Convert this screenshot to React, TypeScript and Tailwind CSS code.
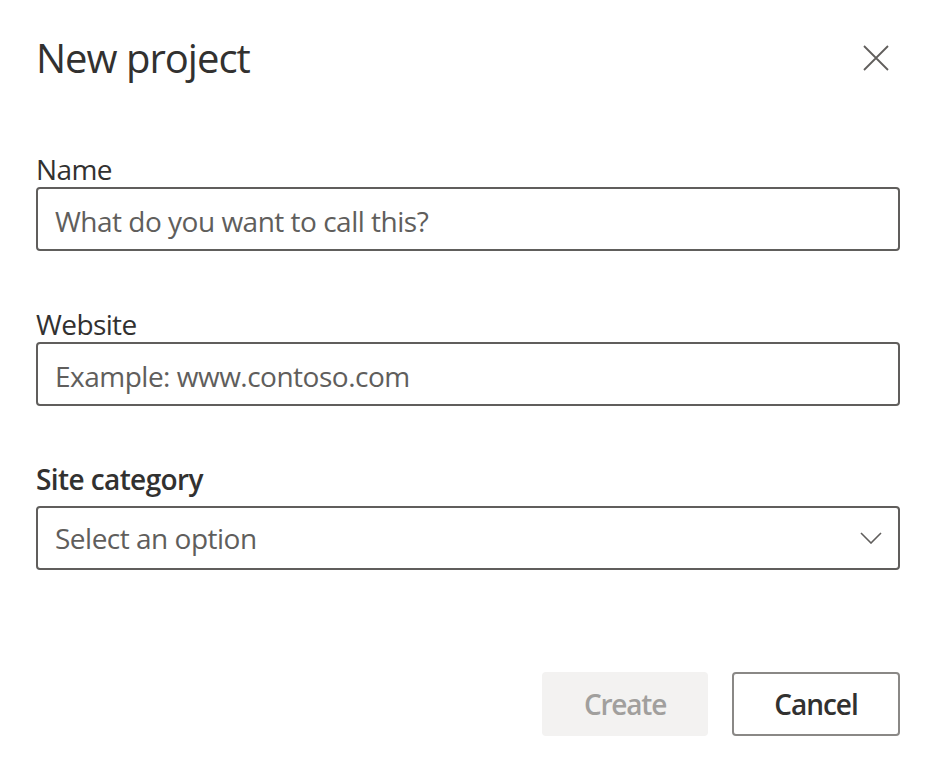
import { useState } from 'react';

const font = { fontFamily: '"Open Sans", "Noto Sans", Arial, sans-serif' };

export default function App() {
  const [name, setName] = useState('');
  const [site, setSite] = useState('');

  return (
    <div className="w-[942px] h-[764px] bg-white px-[36px] text-[#323130]" style={font}>
      <div className="w-[864px]">
        <div className="flex items-center justify-between pt-[32px] h-[84px]">
          <h1 className="text-[40px] leading-[52px] font-normal tracking-[-1px]">New project</h1>
          <button className="w-12 h-12 flex items-center justify-center text-[#605e5c]">
            <svg width="26" height="26" viewBox="0 0 26 26" fill="none" stroke="currentColor" strokeWidth="1.8">
              <path d="M1 1L25 25M25 1L1 25" />
            </svg>
          </button>
        </div>

        <label className="block mt-[67px] text-[28px] leading-[36px] tracking-[-0.6px]">Name</label>
        <input
          value={name}
          onChange={(e) => setName(e.target.value)}
          placeholder="What do you want to call this?"
          className="block w-full h-[64px] border-2 border-[#605e5c] rounded-[4px] px-[17px] pt-[3px] text-[28px] tracking-[-0.5px] outline-none placeholder:text-[#605e5c]"
        />

        <label className="block mt-[55px] text-[28px] leading-[36px] tracking-[-0.6px]">Website</label>
        <input
          value={site}
          onChange={(e) => setSite(e.target.value)}
          placeholder="Example: www.contoso.com"
          className="block w-full h-[64px] border-2 border-[#605e5c] rounded-[4px] px-[17px] pt-[3px] text-[28px] tracking-[-0.5px] outline-none placeholder:text-[#605e5c]"
        />

        <div className="mt-[55px] text-[28px] leading-[36px] font-semibold tracking-[-0.6px]">Site category</div>
        <div className="mt-[9px] flex items-center justify-between h-[64px] border-2 border-[#605e5c] rounded-[4px] pl-[17px] pr-[16px] text-[28px] tracking-[-0.5px] text-[#605e5c]">
          <span>Select an option</span>
          <svg width="22" height="12" viewBox="0 0 22 12" fill="none" stroke="currentColor" strokeWidth="1.6">
            <path d="M1 1L11 11L21 1" />
          </svg>
        </div>

        <div className="mt-[102px] flex justify-end gap-[24px]">
          <button disabled className="w-[166px] h-[64px] rounded-[4px] bg-[#f3f2f1] text-[#a19f9d] text-[28px] font-semibold tracking-[-1.2px]">
            Create
          </button>
          <button className="w-[168px] h-[64px] rounded-[4px] border-2 border-[#8a8886] bg-white text-[#323130] text-[28px] font-semibold tracking-[-1px]">
            Cancel
          </button>
        </div>
      </div>
    </div>
  );
}
